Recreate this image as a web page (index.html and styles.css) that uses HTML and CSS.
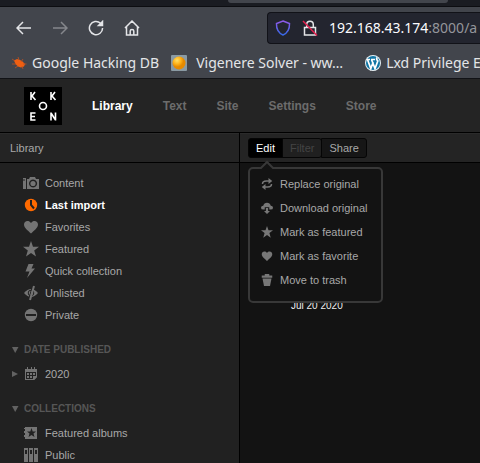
FILE: index.html
```html
<!DOCTYPE html>
<html lang="en">
<head>
<meta charset="utf-8">
<title>Koken Library</title>
<link rel="stylesheet" href="styles.css">
</head>
<body>
<svg class="defs" aria-hidden="true">
  <symbol id="star" viewBox="0 0 16 16"><path d="M8 0l2 5.700h6l-4.800 3.700L13 15.500 8 12l-5 3.500 1.800-6.100L0 5.700h6z"/></symbol>
  <symbol id="heart" viewBox="0 0 16 16"><path d="M8 14.500C5 11.500 1 9 1 5.500 1 1.500 6 .8 8 4c2-3.200 7-2.500 7 1.500 0 3.500-4 6-7 9z"/></symbol>
</svg>
<div class="browser">
  <div class="tabs"><span class="tab"></span></div>
  <div class="toolbar">
    <button class="tool" aria-label="Back"><svg viewBox="0 0 16 16"><path d="M15 8H1.500M7 2L1 8l6 6"/></svg></button>
    <button class="tool dim" aria-label="Forward" disabled><svg viewBox="0 0 16 16"><path d="M1 8h13.500M9 2l6 6-6 6"/></svg></button>
    <button class="tool" aria-label="Reload"><svg viewBox="0 0 16 16"><path d="M12.500 3.200A6.600 6.600 0 1 0 14.600 8"/><path class="solid" d="M14.500 1.500v4H10.500z"/></svg></button>
    <button class="tool" aria-label="Home"><svg viewBox="0 0 16 16"><path d="M1 8l7-7 7 7M2.500 7v8h11V7M6.200 15v-4q0-1.600 1.800-1.600T9.800 11v4"/></svg></button>
    <div class="address">
      <svg viewBox="0 0 16 16"><defs><linearGradient id="sh" x2="0" y2="1"><stop stop-color="#9059e8"/><stop offset="1" stop-color="#3569e8"/></linearGradient></defs><path stroke="url(#sh)" d="M8 1l6.500 2.600C14.700 9 12.500 13 8 15 3.500 13 1.300 9 1.500 3.600z"/></svg>
      <svg viewBox="0 0 16 16"><path d="M2.500 7.500h11V15h-11zM4.700 7V4.500a3.300 3.300 0 0 1 6.600 0V7"/><path class="slash" d="M1 1l14 14.500"/></svg>
      <span class="url"><b>192.168.43.174</b>:8000/a</span>
    </div>
  </div>
  <nav class="bookmarks" aria-label="Bookmarks">
    <a href="#"><svg viewBox="0 0 16 16"><path fill="#ef5f12" d="M3 5.500l3-1.500 3 1 2.500 1.500L14 9l-1 2.500-3 1-3-1-2.500-2.500z"/><path stroke="#c05220" stroke-width=".8" fill="none" d="M1 4l3 2M1 9h4M4 13l3-2M7 2l1 3M12 4l-2 3M15.500 9H12M12 14l-1-3"/></svg>Google Hacking DB</a>
    <a href="#" class="wide"><svg viewBox="0 0 16 16"><defs><radialGradient id="ball" cx=".35" cy=".3"><stop stop-color="#ffe066"/><stop offset=".55" stop-color="#ffb51c"/><stop offset="1" stop-color="#e58a00"/></radialGradient></defs><rect width="16" height="16" rx="1" fill="#8a9aa3"/><circle cx="8" cy="8" r="6.500" fill="url(#ball)"/></svg>Vigenere Solver - ww…</a>
    <a href="#"><svg viewBox="0 0 16 16"><circle cx="8" cy="8" r="8" fill="#e8f2f7"/><circle cx="8" cy="8" r="7" fill="#1176a5"/><path fill="none" stroke="#fff" stroke-width="1.700" d="M2.500 4.500l3.300 9L8.200 7M6.500 4.500l3.500 9 2.800-7.500q-1.800-1.500-.8-3.500M1.800 4.500H5M6 4.500h4"/></svg>Lxd Privilege E</a>
  </nav>
</div>
<header class="header">
  <svg class="logo" viewBox="0 0 38 38" role="img" aria-label="Koken"><rect width="38" height="38"/><path d="M7 5v8M11 5L8 9l3.500 4M27 5v8M31 5l-3 4 3.500 4M11.500 26H7v7h4.500M7 29.500h4M27 33.500v-8M31.500 33.500v-8M27 26l4.500 7"/><circle cx="19" cy="19" r="3.500"/></svg>
  <nav class="main-nav" aria-label="Main"><a href="#" class="current">Library</a><a href="#">Text</a><a href="#">Site</a><a href="#">Settings</a><a href="#">Store</a></nav>
</header>
<div class="workspace">
  <aside class="sidebar">
    <h1 class="bar">Library</h1>
    <ul class="list first">
      <li><a href="#"><svg viewBox="0 0 16 16"><path fill-rule="evenodd" d="M0 3h3v11H0zM4 4h2l1-2h5l1 2h3v10H4zM10 4.500a4 4 0 1 0 .1 0zM0 4.500v1h2v-1z"/><circle cx="10" cy="8.500" r="2.600"/></svg>Content</a></li>
      <li><a href="#" class="current"><svg viewBox="0 0 16 16"><circle cx="8" cy="8" r="6.200"/><path class="cut" d="M8 3v5l3 3.500"/></svg>Last import</a></li>
      <li><a href="#"><svg><use href="#heart"/></svg>Favorites</a></li>
      <li><a href="#"><svg><use href="#star"/></svg>Featured</a></li>
      <li><a href="#"><svg viewBox="0 0 16 16"><path d="M5.500 1h5L8.500 5.500H12L4 15l2.500-6.500H2.500z"/></svg>Quick collection</a></li>
      <li><a href="#"><svg viewBox="0 0 16 16"><path d="M1 8q7-8 14 0-7 8-14 0z"/><circle class="ring" cx="8" cy="8" r="2.800"/><path class="cut thin" d="M9.500 1l-4 14"/><path class="bar-line" d="M11 1L7 15"/></svg>Unlisted</a></li>
      <li><a href="#"><svg viewBox="0 0 16 16"><circle cx="8" cy="8" r="6.200"/><path class="cut" d="M3 8h10"/></svg>Private</a></li>
    </ul>
    <h2><svg viewBox="0 0 8 8"><path d="M1 1h6.500L4.200 7z"/></svg>DATE PUBLISHED</h2>
    <ul class="list">
      <li><a href="#" class="tree"><svg class="arrow" viewBox="0 0 8 8"><path d="M1 1l6 3-6 3z"/></svg><svg viewBox="0 0 16 16"><path fill-rule="evenodd" d="M2 3h12v8l-3 3H2zM3 6v7h7v-3h3V6z"/><path d="M4 1h1v3H4zM8 1h1v3H8zM11 1h1v3h-1zM4 7h2v2H4zM7 7h2v2H7zM10 7h2v2h-2zM4 10h2v2H4zM7 10h2v2H7zM11 11h3l-3 3z"/></svg>2020</a></li>
    </ul>
    <h2><svg viewBox="0 0 8 8"><path d="M1 1h6.500L4.200 7z"/></svg>COLLECTIONS</h2>
    <ul class="list">
      <li><a href="#"><svg viewBox="0 0 16 16"><path fill-rule="evenodd" d="M2 2h12v12H2v-2H1v-2h1V8H1V6h1V4H1V3h1zM8.500 3L7.300 6.500H4L6.500 8.600 5.500 12l3-2 3 2-1-3.400L13 6.500H9.700z"/></svg>Featured albums</a></li>
      <li><a href="#"><svg viewBox="0 0 16 16"><path fill-rule="evenodd" d="M1 1h4v14H1zM6 1h4v14H6zM11 1h4v14h-4zM2 3v4h2V3zM7 3v4h2V3zM12 3v4h2V3z"/></svg>Public</a></li>
    </ul>
  </aside>
  <main class="content">
    <div class="bar actions">
      <div class="edit"><button class="active" aria-expanded="true">Edit</button>
        <div class="menu">
          <svg class="pointer" viewBox="0 0 16 9"><path d="M1 9l7-7 7 7"/></svg>
          <button><svg viewBox="0 0 16 16"><path class="bar-line" d="M2 8q0-4 5-4h4M14 8q0 4-5 4H5"/><path d="M10 0l5 4-5 4zM6 8l-5 4 5 4z"/></svg>Replace original</button>
          <button><svg viewBox="0 0 16 16"><path d="M3 10Q0 10 0 7.500T3 5Q4 1 8 1t5 4q3 0 3 2.500T13 10h-2V7H5v3zM6.500 8h3v4H12l-4 4-4-4h2.500z"/></svg>Download original</button>
          <button><svg><use href="#star"/></svg>Mark as featured</button>
          <button><svg><use href="#heart"/></svg>Mark as favorite</button>
          <button><svg viewBox="0 0 16 16"><path d="M1 2h4V0h6v2h4v3H1zM2 6h12l-2 10H4z"/></svg>Move to trash</button>
        </div>
      </div>
      <button disabled>Filter</button>
      <button>Share</button>
    </div>
    <time class="date" datetime="2020-07-20">Jul 20 2020</time>
  </main>
</div>
</body>
</html>
```
FILE: styles.css
```css
* { box-sizing: border-box; }
body {
  margin: 0;
  height: 100vh;
  overflow: hidden;
  display: flex;
  flex-direction: column;
  background: #131313;
  color: #a8a8a8;
  font: 11px/22px "Liberation Sans", Arial, sans-serif;
}
a { color: inherit; text-decoration: none; }
button { font: inherit; color: inherit; border: 0; background: none; padding: 0; }
svg { flex: none; width: 16px; height: 16px; fill: currentColor; }
.defs { position: absolute; width: 0; height: 0; }

.browser {
  flex: none;
  overflow: hidden;
  background: #42454c;
  border-bottom: 1px solid #111216;
  color: #e4e5e8;
  font-family: "Noto Sans", sans-serif;
}
.tabs {
  display: flex;
  height: 7px;
  padding-left: 228px;
  background: #1a1c22;
  border-bottom: 1px solid #0c0d11;
}
.tab { width: 220px; height: 3px; background: #42454c; border-radius: 0 0 4px 4px; }
.toolbar { display: flex; align-items: center; height: 41px; padding-left: 16px; }
.toolbar svg { fill: none; stroke: currentColor; stroke-width: 1.5; }
.toolbar .solid { fill: currentColor; }
.toolbar .slash { stroke: #e3204f; }
.tool { display: flex; margin-right: 20px; }
.dim { color: #85878c; }
.address {
  flex: 1;
  display: flex;
  align-items: center;
  gap: 11px;
  height: 32px;
  margin-left: 107px;
  padding-left: 7px;
  background: #23252f;
  border: 1px solid #111218;
  border-right: 0;
  border-radius: 4px 0 0 4px;
  overflow: hidden;
  white-space: nowrap;
}
.url { font-size: 14px; color: #94959b; }
.url b { font-weight: 400; color: #fbfbfe; }
.bookmarks { display: flex; gap: 12px; height: 30px; padding-left: 11px; font-size: 14px; white-space: nowrap; }
.bookmarks a { display: flex; align-items: center; gap: 5px; }
.bookmarks .wide { gap: 9px; margin-right: 10px; }

.header {
  flex: none;
  display: flex;
  align-items: center;
  gap: 30px;
  height: 54px;
  padding-left: 24px;
  background: #242424;
  border-bottom: 1px solid #000;
}
.logo { width: 38px; height: 38px; }
.logo rect { fill: #000; }
.logo path, .logo circle { fill: none; stroke: #fff; stroke-width: 1.6; }
.main-nav { display: flex; gap: 30px; font-size: 12px; font-weight: 700; color: #6c6c6c; }
.main-nav .current { color: #fff; }

.workspace { flex: 1; min-height: 0; display: grid; grid-template-columns: 240px 1fr; }
.sidebar { background: #212121; border-right: 1px solid #000; overflow: hidden; }
.bar {
  margin: 0;
  height: 30px;
  padding: 3px 10px;
  background: #242424;
  border-bottom: 1px solid #000;
  border-top: 1px solid #2b2b2b;
  font-size: 11px;
  font-weight: 400;
}
.list { list-style: none; margin: 0; padding: 0; }
.first { padding-top: 9px; }
.list a { display: flex; align-items: center; gap: 6px; padding-left: 23px; }
.list svg { color: #747474; }
.list .current { color: #fff; font-weight: 700; }
.list .current svg { color: #ff6a00; }
.list .tree { padding-left: 11px; gap: 6px; }
.tree .arrow, h2 svg { width: 8px; height: 8px; color: #626262; }
.tree .arrow { margin-right: -2px; }
.cut { fill: none; stroke: #212121; stroke-width: 2; }
.thin { stroke-width: 1; }
.ring { fill: none; stroke: #212121; }
.bar-line { fill: none; stroke: currentColor; stroke-width: 2; }
h2 {
  display: flex;
  align-items: center;
  gap: 5px;
  margin: 13px 0 2px;
  padding-left: 11px;
  font-size: 10px;
  font-weight: 700;
  color: #565656;
}

.content { min-width: 0; }
.actions { display: flex; padding: 4px 8px; line-height: 18px; }
.actions > button, .active {
  height: 20px;
  padding: 0 7px;
  background: #161616;
  border: 1px solid #050505;
  border-radius: 0 3px 3px 0;
}
.actions > button { margin-left: -1px; }
.actions > button:disabled { background: #202020; color: #444; }
.actions .active { background: #000; color: #fff; border-radius: 3px 0 0 3px; }
.edit { position: relative; }
.menu {
  position: absolute;
  top: 29px;
  left: 0;
  width: 135px;
  padding: 3px 11px 9px;
  background: #131313;
  border: 2px solid #383838;
  border-radius: 5px;
}
.pointer { position: absolute; top: -9px; left: 9px; height: 9px; fill: #131313; stroke: #383838; stroke-width: 2; }
.menu button { display: flex; align-items: center; gap: 7px; height: 24px; white-space: nowrap; }
.menu button svg { width: 12px; height: 12px; color: #777; }
.date { display: block; margin: 132px 0 0 51px; font-size: 10px; color: #eee; }
```
